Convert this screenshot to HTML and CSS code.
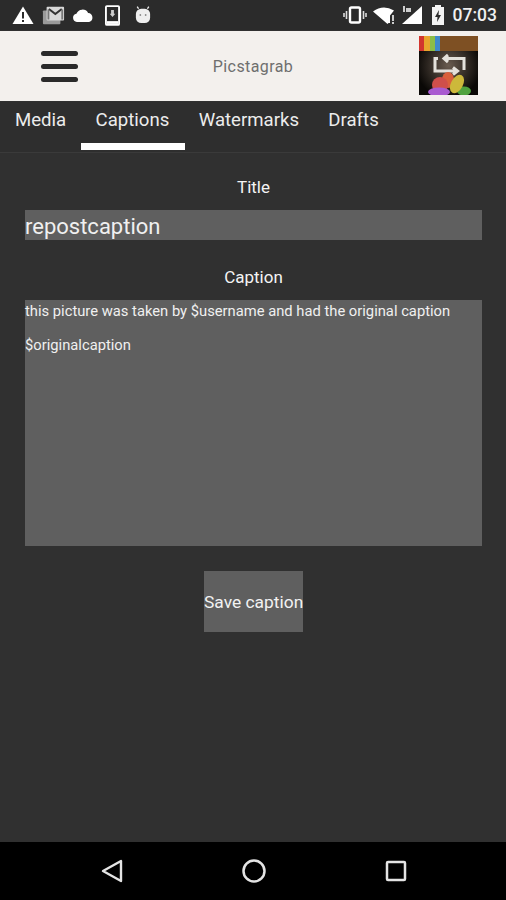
FILE: index.html
```html
<!DOCTYPE html>
<html lang="en">
<head>
<meta charset="utf-8">
<title>Picstagrab</title>
<link rel="stylesheet" href="styles.css">
</head>
<body>
<div class="phone">
  <div class="status">
    <div class="status-group left">
      <svg class="ic" width="22" height="20" viewBox="0 0 22 20"><path fill="#fff" d="M11 1.500 21.500 19H.5z"/><path fill="#2b2b2b" d="M10 7h2v6.500h-2zM10 15h2v2h-2z"/></svg>
      <svg class="ic gmail" width="23" height="20" viewBox="0 0 25 20"><rect x="1" y="5" width="19" height="15" rx="1" fill="#9a9a9a"/><rect x="5" y="1" width="19" height="15" rx="1" fill="#d8d8d8"/><path d="M7.500 3.500 14.500 9l7-5.500" fill="none" stroke="#333" stroke-width="2.200"/><path d="M7 4v11M22 4v11" stroke="#777" stroke-width="2"/></svg>
      <svg class="ic cloud" width="22" height="13" viewBox="0 0 23 14"><path fill="#fff" d="M5 14a4.500 4.500 0 0 1-.6-8.900A7 7 0 0 1 17 4.200 5 5 0 0 1 18 14z"/></svg>
      <svg class="ic device" width="15" height="21" viewBox="0 0 16 22"><rect x="1" y="1" width="14" height="20" rx="1" fill="none" stroke="#fff" stroke-width="2"/><rect x="2" y="17" width="12" height="3" fill="#fff"/><path fill="#ccc" d="M6.500 5h3v4H11l-3 3.500L5 9h1.500z"/></svg>
      <svg class="ic android" width="16" height="18" viewBox="0 0 18 20"><path d="M4 3 2.500.5M14 3l1.500-2.500" stroke="#eee" stroke-width="1.500"/><rect x="1" y="3" width="16" height="16" rx="6" fill="#eee"/><circle cx="6" cy="10" r="1" fill="#888"/><circle cx="12" cy="10" r="1" fill="#888"/></svg>
    </div>
    <div class="status-group right">
      <svg class="ic" width="24" height="18" viewBox="0 0 24 18"><rect x="7" y="1.500" width="10" height="15" rx="1.500" fill="none" stroke="#fff" stroke-width="2.400"/><path d="M3.500 5v8M1 7v4M20.500 5v8M23 7v4" stroke="#ddd" stroke-width="1.600"/></svg>
      <svg class="ic wifi" width="24" height="19" viewBox="0 0 24 19"><path fill="#fff" d="M0 5.500Q10-2 21 4.500L17 9.600V17h-1.500l-1 1z"/><path fill="#ccc" d="M19 9h2v6h-2zM19 16h2v2h-2z"/></svg>
      <svg class="ic signal" width="22" height="20" viewBox="0 0 22 20"><path fill="#fff" d="M21 1v18H1z"/><path fill="#2b2b2b" d="M0 0h12v9H0z"/><path fill="#ccc" d="M2 1h2v6H2zM5 3h5v4H5z"/></svg>
      <svg class="ic batt" width="14" height="22" viewBox="0 0 14 22"><path fill="#f2f2f2" d="M4 1h6v2h3v18H1V3h3z"/><path fill="#2b2b2b" d="M8 6 4 13h2.500L6 18l4-7H7.500z"/></svg>
      <span class="clock">07:03</span>
    </div>
  </div>

  <header class="appbar">
    <div class="burger"><span></span><span></span><span></span></div>
    <div class="app-title">Picstagrab</div>
    <svg class="logo" width="59" height="59" viewBox="0 0 59 59">
      <defs>
        <radialGradient id="glow" cx="50%" cy="50%" r="55%"><stop offset="0" stop-color="#6a5c50"/><stop offset="1" stop-color="#0a0806"/></radialGradient>
      </defs>
      <rect width="59" height="59" fill="url(#glow)"/>
      <rect width="59" height="15" fill="#7e5023"/>
      <rect width="5" height="15" fill="#d2352e"/>
      <rect x="5" width="6" height="15" fill="#e8a52d"/>
      <rect x="11" width="5" height="15" fill="#8cbd45"/>
      <rect x="16" width="5" height="15" fill="#3f89c9"/>
      <path d="M19 22.500h-3V35h22M34 31.500l4.500 3.500-4.500 3.500M45 34V22.500H25M29 19l-4 3.500 4 3.500" fill="none" stroke="#e4e1db" stroke-width="3"/>
      <ellipse cx="29" cy="44" rx="6" ry="8" fill="#d9603c"/>
      <ellipse cx="21" cy="49" rx="8" ry="8" fill="#cf4f4b"/>
      <ellipse cx="20" cy="56" rx="11" ry="4.500" fill="#a95bd0"/>
      <ellipse cx="45" cy="55" rx="7" ry="4.500" fill="#4fa23e"/>
      <ellipse cx="38" cy="48" rx="6" ry="10" fill="#cdb83a" transform="rotate(28 38 48)"/>
    </svg>
  </header>

  <nav class="tabs">
    <div class="tab">Media</div>
    <div class="tab active">Captions</div>
    <div class="tab">Watermarks</div>
    <div class="tab">Drafts</div>
  </nav>

  <main class="content">
    <div class="label">Title</div>
    <div class="field title-field">repostcaption</div>
    <div class="label caption-label">Caption</div>
    <div class="field caption-field">
      <p>this picture was taken by $username and had the original caption</p>
      <p>$originalcaption</p>
    </div>
    <div class="save">Save caption</div>
  </main>

  <footer class="navbar">
    <svg width="24" height="24" viewBox="0 0 24 24"><path d="M21 2v20L3 12z" fill="none" stroke="#e4e4e4" stroke-width="2.400" stroke-linejoin="round"/></svg>
    <svg width="26" height="26" viewBox="0 0 26 26"><circle cx="13" cy="13" r="10.500" fill="none" stroke="#e4e4e4" stroke-width="2.500"/></svg>
    <svg class="nav-square" width="22" height="22" viewBox="0 0 22 22"><rect x="2" y="2" width="18" height="18" rx="1" fill="none" stroke="#e4e4e4" stroke-width="2.500"/></svg>
  </footer>
</div>
</body>
</html>
```
FILE: styles.css
```css
* { box-sizing: border-box; }
html, body { margin: 0; padding: 0; }
body { background: #303030; font-family: Roboto, "Liberation Sans", sans-serif; color: #f2f2f2; }
.phone { width: 506px; height: 900px; display: flex; flex-direction: column; overflow: hidden; }

.status { height: 30px; flex: none; background: #2b2b2b; display: flex; justify-content: space-between; align-items: center; padding: 0 9px 0 12px; }
.status-group { display: flex; align-items: center; }
.left .gmail { margin-left: 8px; }
.left .cloud { margin-left: 7px; }
.left .device { margin-left: 11px; }
.left .android { margin-left: 15px; }
.right .wifi { margin-left: 6px; }
.right .signal { margin-left: 4.500px; }
.right .batt { margin-left: 7.500px; }
.clock { font-size: 17.500px; font-weight: 500; color: #f0f0f0; margin-left: 8px; }
.ic { display: block; }

.appbar { height: 70px; flex: none; margin-top: 1px; background: #f3f0ed; display: flex; align-items: center; justify-content: space-between; padding: 0 28px 0 41px; position: relative; }
.burger { display: flex; flex-direction: column; gap: 8px; width: 37px; }
.burger span { display: block; height: 5px; border-radius: 3px; background: #2a2a2a; }
.app-title { position: absolute; left: 0; right: 0; top: 26px; text-align: center; font-size: 16px; letter-spacing: .4px; color: #6e6e6e; }
.logo { display: block; position: relative; margin-bottom: 2px; }

.tabs { height: 51px; flex: none; margin-top: 1px; padding-left: .3px; background: #2e2e2e; border-bottom: 1px solid #3a3a3a; display: flex; }
.tab { font-size: 18.600px; line-height: 36px; padding: 0 14.700px; color: #ececec; }
.active { position: relative; }
.active::after { content: ""; position: absolute; left: 0; right: -1px; top: 41px; height: 7px; background: #fff; }

.content { flex: 1; padding: 24px 24px 0 25px; display: flex; flex-direction: column; align-items: stretch; background: #303030; }
.label { text-align: center; font-size: 17px; line-height: 20px; color: #f4f4f4; height: 20px; }
.caption-label { margin-top: 27px; }
.field { background: #5f5f5f; color: #f0f0f0; }
.title-field { height: 30px; margin-top: 13px; font-size: 22px; line-height: 33px; }
.caption-field { height: 246px; margin-top: 13px; font-size: 14.750px; line-height: 22px; }
.caption-field p { margin: 0 0 12px; }
.save { align-self: center; width: 99px; height: 61px; margin-top: 25px; background: #5f5f5f; font-size: 17.400px; line-height: 63px; text-align: center; white-space: nowrap; color: #f2f2f2; }

.navbar { height: 58px; flex: none; background: #000; display: flex; align-items: center; padding-bottom: 1px; padding-left: 100px; gap: 117px; }
.nav-square { margin-left: 1px; }
```
